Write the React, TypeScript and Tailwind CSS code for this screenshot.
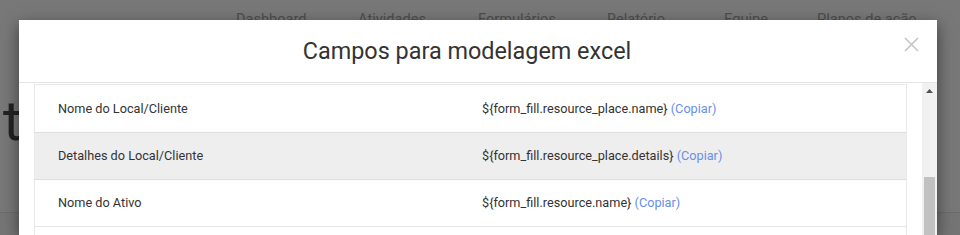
import React from "react";

const rows = [
  { label: "Nome do Local/Cliente", code: "${form_fill.resource_place.name}", bg: "bg-white" },
  { label: "Detalhes do Local/Cliente", code: "${form_fill.resource_place.details}", bg: "bg-[#eeeeee]" },
  { label: "Nome do Ativo", code: "${form_fill.resource.name}", bg: "bg-white" },
];

export default function App() {
  return (
    <div
      className="relative w-[960px] h-[235px] overflow-hidden bg-[#787878]"
      style={{ fontFamily: "Roboto, 'Liberation Sans', sans-serif" }}
    >
      {/* background page */}
      <div className="flex pl-[236px] pt-[9px] text-[14.6px] text-[#4e4e4e] whitespace-nowrap">
        <span className="w-[122px]">Dashboard</span>
        <span className="w-[120px]">Atividades</span>
        <span className="w-[129px]">Formulários</span>
        <span className="w-[117px]">Relatório</span>
        <span className="w-[93px]">Equipe</span>
        <span>Planos de ação</span>
      </div>
      <div className="pl-[3px] pt-[62px] text-[56px] leading-none text-[#222]">t</div>
      <div className="absolute left-0 right-0 top-[212px] bottom-0 border-t border-[#6c6c6c] bg-[#757575]" />

      {/* modal */}
      <div className="absolute left-[19px] top-[20px] w-[918px] h-[215px] bg-white shadow-[0_5px_15px_rgba(0,0,0,0.5)] flex flex-col overflow-hidden">
        <div className="relative shrink-0 h-[63px] border-b border-[#e5e5e5] flex items-center justify-center pr-[22px]">
          <h4 className="text-[23.4px] text-[#333] pt-[1px]">Campos para modelagem excel</h4>
          <svg className="absolute left-[885px] top-[17px]" width="15" height="15" viewBox="0 0 15 15">
            <path d="M1 1 L14 14 M14 1 L1 14" stroke="#c4c4c4" strokeWidth="1.6" />
          </svg>
        </div>
        <div className="flex flex-1 min-h-0">
          <div className="flex-1 px-[15px] pt-[1px] overflow-hidden">
            <div className="border-l border-t border-r border-[#e8e8e8] text-[12.7px] text-[#333]">
              {rows.map((r, i) => (
                <div
                  key={i}
                  className={`flex h-[47px] items-center ${r.bg} ${i > 0 ? "border-t border-[#dddddd]" : ""}`}
                >
                  <div className="w-[424px] pl-[23px]">{r.label}</div>
                  <div className="pl-[23px]">
                    {r.code} <span className="text-[#6a8ee8]">(Copiar)</span>
                  </div>
                </div>
              ))}
              <div className="h-[47px] border-t border-[#e6e6e6] bg-white" />
            </div>
          </div>
          <div className="w-[15px] bg-[#f1f1f1] flex flex-col items-center">
            <svg className="mt-[6px]" width="7" height="4" viewBox="0 0 7 4">
              <path d="M0 4 L3.5 0 L7 4 Z" fill="#505050" />
            </svg>
            <div className="mt-[84px] w-[11px] flex-1 bg-[#c1c1c1]" />
          </div>
        </div>
      </div>
    </div>
  );
}
